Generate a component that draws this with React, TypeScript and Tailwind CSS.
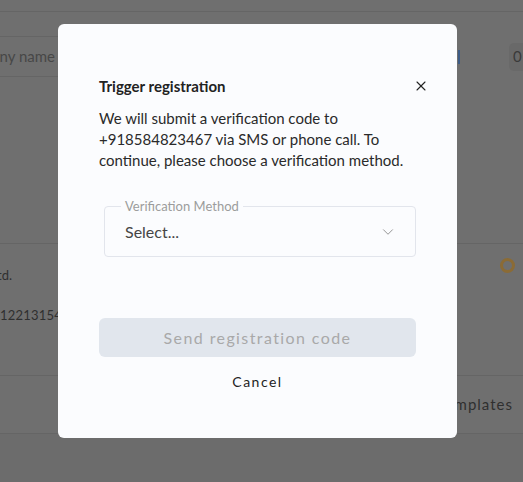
import { X, ChevronDown } from 'lucide-react';

const font = { fontFamily: 'Lato, "Noto Sans", sans-serif' };

function Backdrop() {
  return (
    <div className="flex h-full flex-col text-[#3a3a3a]">
      <div className="h-[12px] border-b border-[#656565]" />
      <div className="mt-[24px] flex h-[41px] items-center justify-between">
        <div className="flex h-full w-[150px] items-center overflow-hidden border-y border-[#656565]">
          <div className="flex w-[55px] shrink-0 justify-end">
            <span className="shrink-0 whitespace-nowrap text-[15px] text-[#474747]">Company name</span>
          </div>
        </div>
        <div className="flex items-center gap-[49px]">
          <div className="h-[14px] w-[2px] bg-[#3d5c86]" />
          <div className="flex h-[28px] w-[14px] items-center rounded-l-[5px] bg-[#696969] pl-[4px] text-[15px] text-[#3a3a3a]">
            0
          </div>
        </div>
      </div>
      <div className="mt-[166px] flex h-[133px] justify-between border-y border-[#656565]">
        <div className="flex flex-col pt-[22px] text-[13px] text-[#2f2f2f]">
          <div className="flex w-[12px] justify-end">
            <span className="shrink-0 whitespace-nowrap">Marshall Pvt Ltd.</span>
          </div>
          <div className="mt-[20px] flex w-[62px] justify-end">
            <span className="shrink-0 whitespace-nowrap tracking-[0.2px]">+9194412213154</span>
          </div>
        </div>
        <div className="pr-[8px] pt-[14px]">
          <div className="h-[15px] w-[15px] rounded-full border-[3.5px] border-[#8b6b35]" />
        </div>
      </div>
      <div className="flex h-[57px] items-center justify-end pr-[10px]">
        <span className="text-[15px] tracking-[1px] text-[#2f2f2f]">Templates</span>
      </div>
      <div className="flex-1 border-t border-[#656565] bg-[#6c6c6c]" />
    </div>
  );
}

export default function App() {
  return (
    <div style={font} className="relative h-[482px] w-[523px] overflow-hidden bg-[#6f6f6f]">
      <Backdrop />
      <div className="absolute left-[58px] top-[24px] w-[399px] rounded-[6px] bg-[#fbfcfe] px-[41px] pb-[46px] pt-[52px]">
        <button className="absolute right-[28px] top-[54px] text-[#222]">
          <X size={16} strokeWidth={1.6} />
        </button>
        <h2 className="text-[15px] font-bold leading-[20px] text-[#222]">Trigger registration</h2>
        <p className="mt-[12px] text-[15px] leading-[21px] text-[#2a2a2a]">
          We will submit a verification code to +918584823467 via SMS or phone call. To continue, please choose a
          verification method.
        </p>
        <div className="relative ml-[5px] mt-[35px] flex h-[51px] items-center justify-between rounded-[4px] border border-[#e2e5ec] pl-[20px] pr-[18px]">
          <span className="absolute -top-[9px] left-[16px] bg-[#fbfcfe] px-[4px] text-[13px] leading-[16px] text-[#9c9c9c]">
            Verification Method
          </span>
          <span className="text-[16px] text-[#454545]">Select...</span>
          <ChevronDown size={18} strokeWidth={1.2} className="text-[#8a8a8a]" />
        </div>
        <button className="mt-[61px] h-[39px] w-full rounded-[6px] bg-[#e1e6ed] text-[16px] tracking-[1.4px] text-[#a9a9a9]">
          Send registration code
        </button>
        <div className="mt-[15px] text-center text-[14px] leading-[20px] tracking-[1.5px] text-[#222]">Cancel</div>
      </div>
    </div>
  );
}
